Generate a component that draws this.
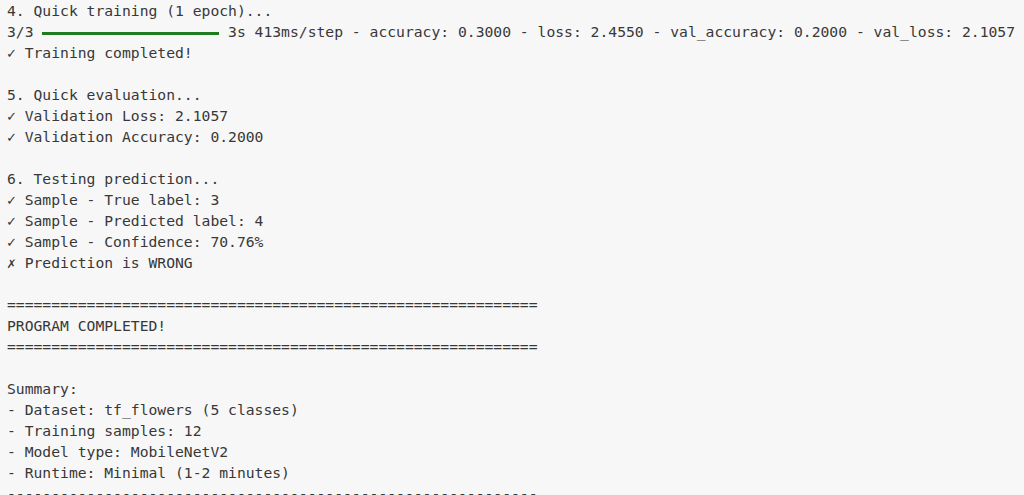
import React from 'react';

const lines: string[] = [
  '4. Quick training (1 epoch)...',
  '__BAR__',
  '✓ Training completed!',
  '',
  '5. Quick evaluation...',
  '✓ Validation Loss: 2.1057',
  '✓ Validation Accuracy: 0.2000',
  '',
  '6. Testing prediction...',
  '✓ Sample - True label: 3',
  '✓ Sample - Predicted label: 4',
  '✓ Sample - Confidence: 70.76%',
  '✗ Prediction is WRONG',
  '',
  '='.repeat(60),
  'PROGRAM COMPLETED!',
  '='.repeat(60),
  '',
  'Summary:',
  '- Dataset: tf_flowers (5 classes)',
  '- Training samples: 12',
  '- Model type: MobileNetV2',
  '- Runtime: Minimal (1-2 minutes)',
  '-'.repeat(60),
];

const App: React.FC = () => {
  return (
    <div className="w-[1024px] h-[495px] overflow-hidden bg-[#f7f7f7] text-[#383838] pl-[7px] font-['DejaVu_Sans_Mono',monospace] text-[14.7px]">
      {lines.map((line, i) =>
        line === '__BAR__' ? (
          <div key={i} className="h-[21px] leading-[21px] whitespace-pre">
            {'3/3 '}
            {/* keras progress bar */}
            <span className="inline-block w-[20ch] h-[3px] bg-[#1e7b1e] align-middle" />
            {' 3s 413ms/step - accuracy: 0.3000 - loss: 2.4550 - val_accuracy: 0.2000 - val_loss: 2.1057'}
          </div>
        ) : (
          <div key={i} className="h-[21px] leading-[21px] whitespace-pre">
            {line}
          </div>
        )
      )}
    </div>
  );
};

export default App;
